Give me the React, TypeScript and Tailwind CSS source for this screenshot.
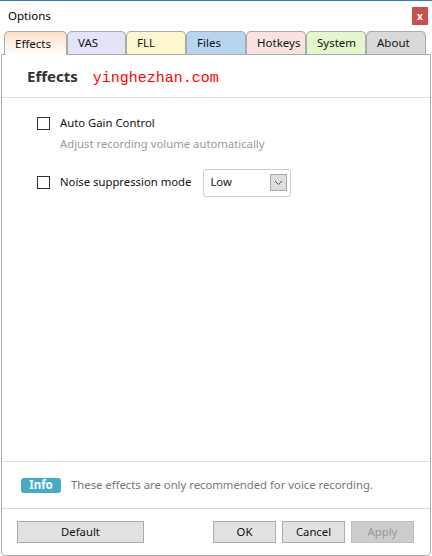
import { useState } from 'react';

const TABS = [
  { name: 'Effects', w: 'w-[63px]', bg: 'bg-gradient-to-b from-[#fde0c6] to-white' },
  { name: 'VAS', w: 'w-[59px]', bg: 'bg-[#e4e4f8]' },
  { name: 'FLL', w: 'w-[60px]', bg: 'bg-[#fdf7cf]' },
  { name: 'Files', w: 'w-[60px]', bg: 'bg-[#b6d5f1]' },
  { name: 'Hotkeys', w: 'w-[60px]', bg: 'bg-[#fde0e0]' },
  { name: 'System', w: 'w-[60px]', bg: 'bg-[#e4f8cc]' },
  { name: 'About', w: 'w-[60px]', bg: 'bg-[#d9d9d9]' },
];

function Checkbox({ checked, onChange }: { checked: boolean; onChange: () => void }) {
  return (
    <button
      onClick={onChange}
      className="w-[13px] h-[13px] border border-[#333] bg-white flex items-center justify-center shrink-0"
    >
      {checked && (
        <svg width="9" height="9" viewBox="0 0 9 9">
          <path d="M1 4.5l2.3 2.3L8 1.8" stroke="#333" strokeWidth="1.4" fill="none" />
        </svg>
      )}
    </button>
  );
}

export default function App() {
  const [tab, setTab] = useState('Effects');
  const [agc, setAgc] = useState(false);
  const [noise, setNoise] = useState(false);

  return (
    <div
      className="w-[432px] h-[556px] bg-white border-t border-[#2a7ad2] flex flex-col text-[11.3px] text-[#111]"
      style={{ fontFamily: '"Noto Sans", "Open Sans", sans-serif' }}
    >
      {/* Title bar */}
      <div className="h-[30px] flex items-center justify-between pl-2 pr-[4px]">
        <span className="text-[11.5px] text-black">Options</span>
        <button className="w-[16px] h-[18px] bg-[#c75050] text-white text-[10px] font-bold flex items-center justify-center leading-none">
          x
        </button>
      </div>

      {/* Tabs */}
      <div className="flex items-end h-[23px] pl-[4px] relative z-10">
        {TABS.map(t => {
          const active = tab === t.name;
          return (
            <button
              key={t.name}
              onClick={() => setTab(t.name)}
              className={`${t.w} ${t.bg} h-[23px] border border-[#aaa] border-b-0 rounded-t-[5px] text-left pl-[10px] text-[11.5px] text-[#111] leading-none ${
                active ? 'h-[24px] -mb-px' : ''
              }`}
            >
              {t.name}
            </button>
          );
        })}
      </div>

      {/* Panel */}
      <div className="flex-1 mx-[1px] border border-[#aaa] rounded-b-[4px] flex flex-col">
        <div className="h-[43px] flex items-center pl-[25px] gap-[15px] border-b border-[#ddd]">
          <span className="text-[15px] font-bold text-[#333]">Effects</span>
          <span className="text-[15px] text-[#f00] mt-[6px]" style={{ fontFamily: '"Liberation Mono", monospace' }}>
            yinghezhan.com
          </span>
        </div>

        <div className="flex-1 pl-[35px] pt-[18px]">
          <div className="flex items-center gap-[10px] h-[14px]">
            <Checkbox checked={agc} onChange={() => setAgc(!agc)} />
            <span>Auto Gain Control</span>
          </div>
          <div className="pl-[23px] mt-[6px] text-[#9a9a9a]">Adjust recording volume automatically</div>

          <div className="flex items-center mt-[16px]">
            <Checkbox checked={noise} onChange={() => setNoise(!noise)} />
            <span className="ml-[10px]">Noise suppression mode</span>
            <div className="ml-[12px] w-[88px] h-[28px] border border-[#ccc] rounded-[3px] flex items-center justify-between pl-[6px] pr-[3px]">
              <span>Low</span>
              <span className="w-[17px] h-[17px] bg-[#ddd] border border-[#aaa] flex items-center justify-center">
                <svg width="9" height="6" viewBox="0 0 9 6">
                  <path d="M1 1l3.5 3.5L8 1" stroke="#555" strokeWidth="1" fill="none" />
                </svg>
              </span>
            </div>
          </div>
        </div>

        <div className="h-[47px] border-t border-[#ddd] flex items-center pl-[19px] gap-[10px]">
          <span className="bg-[#46abcb] text-white font-bold text-[11.5px] rounded-[3px] w-[40px] h-[15px] flex items-center justify-center leading-none">
            Info
          </span>
          <span className="text-[#777]">These effects are only recommended for voice recording.</span>
        </div>

        <div className="h-[47px] border-t border-[#ddd] flex items-center px-[15px] rounded-b-[4px]">
          <button className="w-[127px] h-[22px] bg-[#e1e1e1] border border-[#adadad]">Default</button>
          <div className="ml-auto flex gap-[6px] mr-[1px]">
            <button className="w-[63px] h-[22px] bg-[#e1e1e1] border border-[#adadad]">OK</button>
            <button className="w-[63px] h-[22px] bg-[#e1e1e1] border border-[#adadad]">Cancel</button>
            <button className="w-[63px] h-[22px] bg-[#cccccc] border border-[#bfbfbf] text-[#999]">Apply</button>
          </div>
        </div>
      </div>
    </div>
  );
}
